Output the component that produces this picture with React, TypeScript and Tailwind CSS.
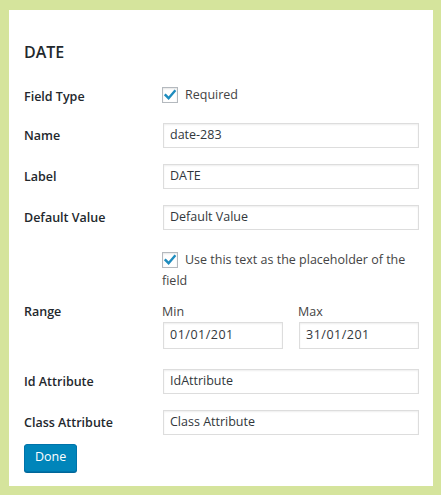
const font = { fontFamily: '"Open Sans", "Noto Sans", sans-serif' };

function Check() {
  return (
    <span className="inline-flex h-4 w-4 shrink-0 items-center justify-center border border-[#b4b9be] bg-white shadow-[inset_0_1px_2px_rgba(0,0,0,0.1)]">
      <svg width="14" height="14" viewBox="0 0 14 14">
        <path d="M2.6 7.2 L5.6 10.2 L11.6 3.2" fill="none" stroke="#1e8cbe" strokeWidth="2.4" strokeLinecap="square" />
      </svg>
    </span>
  );
}

function TextInput({ value, className = "" }: { value: string; className?: string }) {
  return (
    <div
      className={`flex h-[25px] items-center overflow-hidden whitespace-nowrap border border-[#dddddd] bg-white pl-[6px] text-[12.5px] text-[#32373c] shadow-[inset_0_1px_2px_rgba(0,0,0,0.07)] ${className}`}
    >
      {value}
    </div>
  );
}

function Row({ label, value }: { label: string; value: string }) {
  return (
    <div className="flex items-center">
      <div className="w-[138px] pt-px text-[12.5px] font-semibold text-[#23282d]">{label}</div>
      <TextInput value={value} className="ml-px flex-1" />
    </div>
  );
}

export default function App() {
  return (
    <div className="h-[495px] w-[441px] bg-[#d5e49c] pb-[9px] pl-[9px] pr-[8px] pt-[10px]" style={font}>
      <div className="flex h-full flex-col bg-white pl-[15px] pr-[14px] pt-[31px]">
        <h2 className="h-[22px] text-[16px] font-semibold leading-[22px] text-[#23282d]">DATE</h2>

        <div className="mt-[22px] flex items-start">
          <div className="w-[138px] pt-[3px] text-[12.5px] font-semibold leading-[18px] text-[#23282d]">Field Type</div>
          <label className="mt-px flex items-center gap-[7px] text-[12.5px] text-[#444]">
            <Check />
            Required
          </label>
        </div>

        <div className="mt-[17px] flex flex-col gap-4">
          <Row label="Name" value="date-283" />
          <Row label="Label" value="DATE" />
          <Row label="Default Value" value="Default Value" />
        </div>

        <div className="ml-[138px] mt-[19px] text-[12.5px] leading-[21px] text-[#444]">
          <span className="flex items-center gap-[7px] whitespace-nowrap">
            <Check />
            Use this text as the placeholder of the
          </span>
          <span>field</span>
        </div>

        <div className="mt-[12px] flex items-start">
          <div className="w-[138px] text-[12.5px] font-semibold leading-[18px] text-[#23282d]">Range</div>
          <div className="flex gap-[15px]">
            <div className="flex flex-col">
              <span className="text-[12.5px] leading-[18px] text-[#444]">Min</span>
              <TextInput value="01/01/201" className="ml-px mt-px h-[27px] w-[120px] tracking-[0.5px]" />
            </div>
            <div className="flex flex-col">
              <span className="text-[12.5px] leading-[18px] text-[#444]">Max</span>
              <TextInput value="31/01/201" className="ml-px mt-px h-[27px] w-[120px] tracking-[0.5px]" />
            </div>
          </div>
        </div>

        <div className="mt-[20px] flex flex-col gap-4">
          <Row label="Id Attribute" value="IdAttribute" />
          <Row label="Class Attribute" value="Class Attribute" />
        </div>

        <div className="mt-[8px]">
          <button className="h-[28px] rounded-[3px] border border-[#0073aa] bg-[#0085ba] px-[10px] pb-px text-[12.5px] text-white shadow-[0_1px_0_#006799]">
            Done
          </button>
        </div>
      </div>
    </div>
  );
}
